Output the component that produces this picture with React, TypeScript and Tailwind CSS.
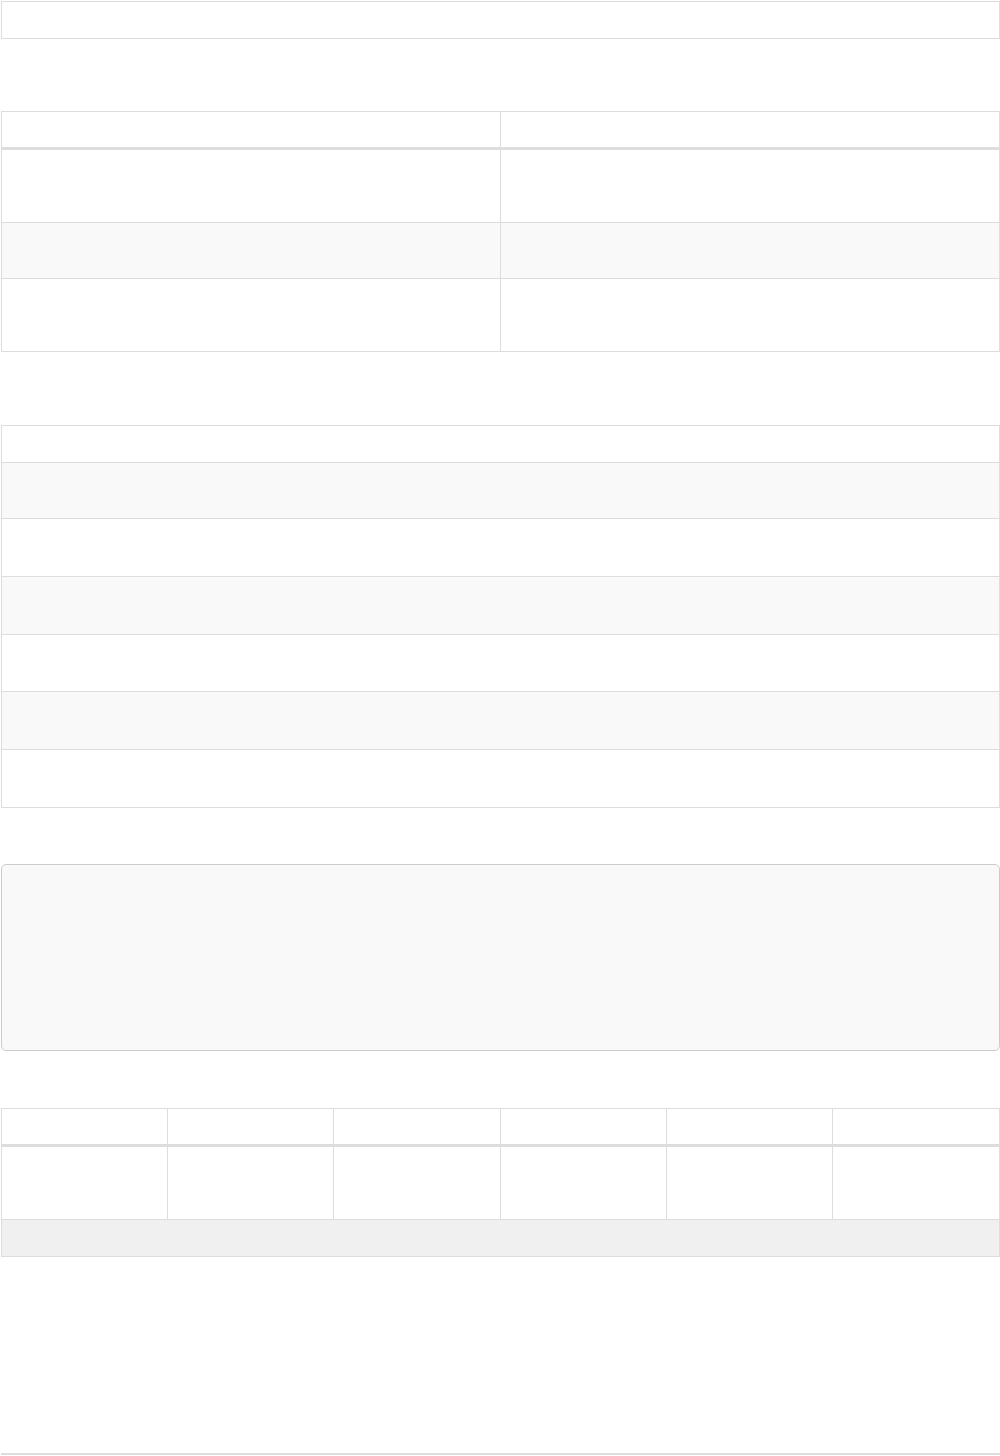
const line = "border-[#ddd]";

function TwoColTable() {
  const rows = [
    { h: "h-[73px]", striped: false },
    { h: "h-[56px]", striped: true },
    { h: "h-[72px]", striped: false },
  ];
  return (
    <div className={`border ${line}`}>
      <div className={`grid h-[38px] grid-cols-2 border-b-[3px] ${line}`}>
        <div className={`border-r ${line}`} />
        <div />
      </div>
      {rows.map((r, i) => (
        <div
          key={i}
          className={`grid grid-cols-2 ${r.h} ${r.striped ? "bg-[#f9f9f9]" : "bg-white"} ${
            i < rows.length - 1 ? `border-b ${line}` : ""
          }`}
        >
          <div className={`border-r ${line}`} />
          <div />
        </div>
      ))}
    </div>
  );
}

function ListTable() {
  const heights = ["h-[56px]", "h-[58px]", "h-[58px]", "h-[57px]", "h-[58px]", "h-[57px]"];
  return (
    <div className={`border ${line}`}>
      <div className={`h-[37px] border-b ${line}`} />
      {heights.map((h, i) => (
        <div
          key={i}
          className={`${h} ${i % 2 === 0 ? "bg-[#f9f9f9]" : "bg-white"} ${
            i < heights.length - 1 ? `border-b ${line}` : ""
          }`}
        />
      ))}
    </div>
  );
}

function SixColTable() {
  const cols = [0, 1, 2, 3, 4, 5];
  return (
    <div className={`border ${line}`}>
      <div className={`grid h-[38px] grid-cols-6 border-b-[3px] ${line}`}>
        {cols.map((c) => (
          <div key={c} className={c < 5 ? `border-r ${line}` : ""} />
        ))}
      </div>
      <div className={`grid h-[73px] grid-cols-6 border-b ${line}`}>
        {cols.map((c) => (
          <div key={c} className={c < 5 ? `border-r ${line}` : ""} />
        ))}
      </div>
      <div className="h-[36px] bg-[#f0f0f0]" />
    </div>
  );
}

export default function App() {
  return (
    <div className="h-[1456px] overflow-hidden bg-white pl-px pt-px font-['Liberation_Sans',sans-serif] text-sm text-[#333]">
      <div className={`h-[38px] border ${line}`} />

      <div className="mt-[72px]">
        <TwoColTable />
      </div>

      <div className="mt-[73px]">
        <ListTable />
      </div>

      <div className="mt-[56px] h-[187px] rounded-[5px] border border-[#ccc] bg-[#f9f9f9]" />

      <div className="mt-[57px]">
        <SixColTable />
      </div>

      <div className={`mt-[196px] border-t-2 ${line}`} />
    </div>
  );
}
